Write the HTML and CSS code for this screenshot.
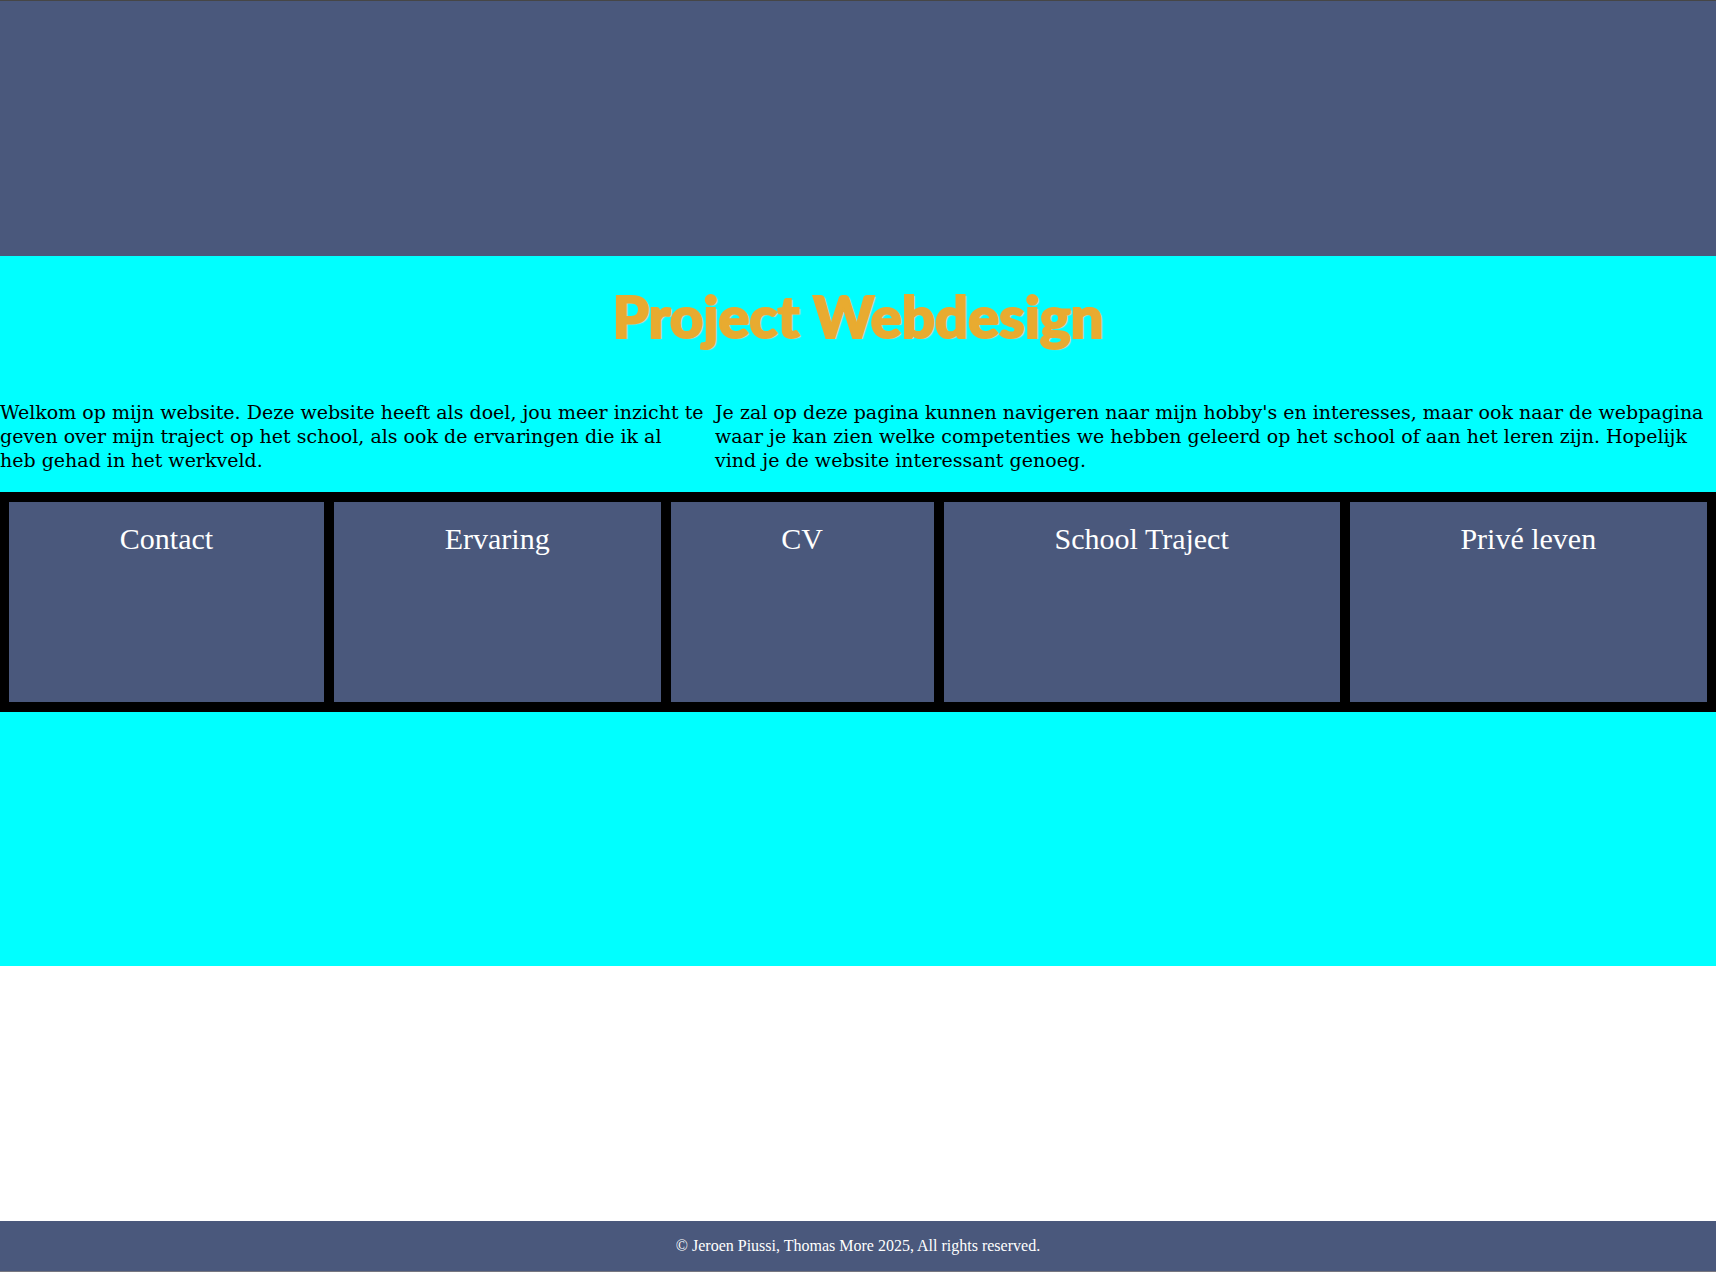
FILE: index.html
```html
<!DOCTYPE html>
<html lang="nl">
<head>
  <meta charset="utf-8">
  <meta name="viewport" content="width=device-width, initial-scale=1">
  <title>Project Webdesign</title>
  <link rel="stylesheet" href="styles.css">
</head>
<body>
  <header class="banner"></header>
  <main class="content">
    <h1 class="title">Project Webdesign</h1>
    <div class="intro">
      <p class="intro-text">Welkom op mijn website. Deze website heeft als doel, jou meer inzicht te geven over mijn traject op het school, als ook de ervaringen die ik al heb&nbsp;gehad in het werkveld.</p>
      <p class="intro-text">Je zal op deze pagina kunnen navigeren naar mijn hobby's en interesses, maar ook naar de webpagina waar je kan zien welke competenties we hebben geleerd op het school of aan het leren zijn. Hopelijk vind je de website interessant genoeg.</p>
    </div>
    <nav class="menu">
      <a class="menu-item" href="#contact">Contact</a>
      <a class="menu-item" href="#ervaring">Ervaring</a>
      <a class="menu-item" href="#cv">CV</a>
      <a class="menu-item" href="#school">School Traject</a>
      <a class="menu-item" href="#prive">Privé leven</a>
    </nav>
  </main>
  <div class="spacer"></div>
  <footer class="footer">© Jeroen Piussi, Thomas More 2025, All rights reserved.</footer>
</body>
</html>
```
FILE: styles.css
```css
* {
  box-sizing: border-box;
}

body {
  display: flex;
  flex-direction: column;
  min-height: 100vh;
  margin: 0;
  border-top: 1px solid #464646;
  border-bottom: 1px solid #767680;
  background: #fff;
  font-family: "Liberation Serif", "Times New Roman", serif;
}

.banner,
.spacer {
  flex: 1 1 0;
}

.banner {
  background: #4a587c;
}

.content {
  flex: 1 1 auto;
  background: #0ff;
}

.title {
  margin: 0;
  padding: 28px 0 52px;
  color: #e8ab30;
  font: 900 58px/64px Lato, sans-serif;
  text-align: center;
  text-shadow: 2px 1px 1px #d3d3d3;
  -webkit-text-stroke: 2px #e8ab30;
}

.intro {
  display: grid;
  grid-template-columns: 707fr 1001fr;
  gap: 8px;
  padding-bottom: 20px;
}

.intro-text {
  margin: 0;
  color: #000;
  font: 19px/24px "DejaVu Serif", serif;
}

.menu {
  display: flex;
  gap: 10px;
  padding: 10px 9px;
  background: #000;
}

.menu-item {
  flex: 1 1 auto;
  min-height: 200px;
  padding: 20px;
  background: #4a587c;
  color: #fff;
  font-size: 30px;
  line-height: 34px;
  text-align: center;
  text-decoration: none;
}

.footer {
  padding: 16px;
  background: #4a587c;
  color: #fff;
  font-size: 16px;
  line-height: 18px;
  text-align: center;
}
```
